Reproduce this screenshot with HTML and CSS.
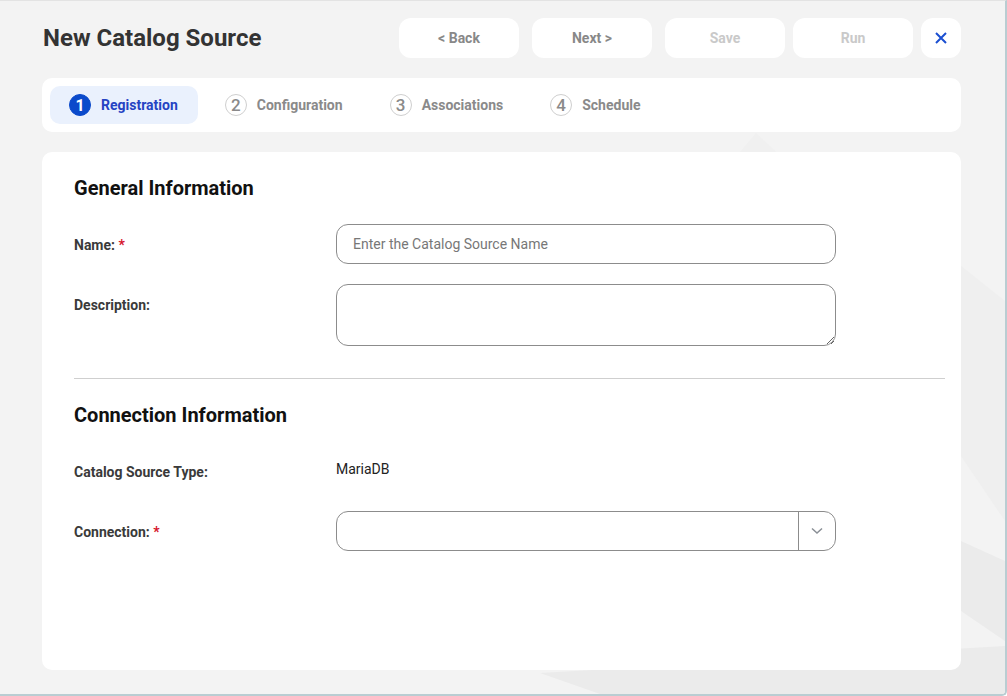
FILE: index.html
```html
<!DOCTYPE html>
<html>
<head>
<meta http-equiv="Content-Type" content="text/html; charset=utf-8"/>
<title>New Catalog Source</title>
<link rel="stylesheet" href="styles.css">
</head>
<body>
<div class="window">
  <svg class="backdrop" viewBox="0 0 1005 693" preserveAspectRatio="none">
    <polygon points="690,210 756,132 840,210" fill="#f0f0f0"/>
    <polygon points="961,265 1005,300 1005,520 961,455" fill="#efefef"/>
    <polygon points="961,540 1005,560 1005,640 961,610" fill="#ebebeb"/>
    <polygon points="540,672 1005,645 1005,693 600,693" fill="#ebebeb"/>
  </svg>

  <div class="header">
    <h1 class="title">New Catalog Source</h1>
    <div class="actions">
      <button class="btn">&lt; Back</button>
      <button class="btn">Next &gt;</button>
      <button class="btn disabled">Save</button>
      <button class="btn disabled">Run</button>
      <button class="btn close" aria-label="Close">
        <svg width="14" height="14" viewBox="0 0 14 14"><path d="M2 2 L12 12 M12 2 L2 12" stroke="#1b4fd1" stroke-width="2" fill="none"/></svg>
      </button>
    </div>
  </div>

  <div class="steps">
    <div class="step active"><span class="num">1</span>Registration</div>
    <div class="step"><span class="num">2</span>Configuration</div>
    <div class="step"><span class="num">3</span>Associations</div>
    <div class="step"><span class="num">4</span>Schedule</div>
  </div>

  <div class="card">
    <h2>General Information</h2>
    <div class="row">
      <label class="label">Name: <span class="req">*</span></label>
      <input class="field" type="text" placeholder="Enter the Catalog Source Name">
    </div>
    <div class="row">
      <label class="label">Description:</label>
      <textarea class="field area"></textarea>
    </div>

    <hr class="divider">

    <h2>Connection Information</h2>
    <div class="row">
      <label class="label">Catalog Source Type:</label>
      <div class="value">MariaDB</div>
    </div>
    <div class="row">
      <label class="label">Connection: <span class="req">*</span></label>
      <div class="field select">
        <span class="select-text"></span>
        <span class="arrow">
          <svg width="12" height="8" viewBox="0 0 12 8"><path d="M1 1.5 L6 6 L11 1.5" stroke="#8a8f96" stroke-width="1.5" fill="none"/></svg>
        </span>
      </div>
    </div>
  </div>
</div>
</body>
</html>
```

FILE: styles.css
```css
* {
  box-sizing: border-box;
}

body {
  margin: 0;
  font-family: Roboto, "Liberation Sans", sans-serif;
  background-color: white;
}

.window {
  position: relative;
  width: 1007px;
  height: 696px;
  padding: 17px 44px 0 42px;
  background-color: #f3f3f3;
  border-top: 1px solid #e3e3e3;
  border-right: 2px solid #b9cdd2;
  border-bottom: 2px solid #b9cdd2;
  border-bottom-right-radius: 5px;
  overflow: hidden;
}

.backdrop {
  position: absolute;
  left: 0;
  top: 0;
  width: 100%;
  height: 100%;
  z-index: 0;
}

.header, .steps, .card {
  position: relative;
  z-index: 1;
}

.header {
  display: flex;
  align-items: center;
  justify-content: space-between;
  height: 40px;
}

.title {
  margin: 0 0 0 1px;
  font-size: 24px;
  font-weight: 700;
  color: #333;
}

.actions {
  display: flex;
  gap: 13px;
}

.btn {
  width: 120px;
  height: 40px;
  border: none;
  border-radius: 12px;
  background: white;
  font-family: Roboto, "Liberation Sans", sans-serif;
  font-size: 14px;
  font-weight: 700;
  color: #888;
}

.btn.disabled {
  color: #c9c9c9;
}

.btn.disabled + .btn {
  margin-left: -5px;
}

.btn.close {
  width: 40px;
  margin-left: -5px;
  display: flex;
  align-items: center;
  justify-content: center;
}

.steps {
  display: flex;
  gap: 8px;
  margin-top: 20px;
  height: 54px;
  padding: 8px;
  background: white;
  border-radius: 10px;
}

.step {
  display: flex;
  align-items: center;
  gap: 10px;
  padding: 0 20px 0 19px;
  border-radius: 10px;
  font-size: 14px;
  font-weight: 700;
  color: #8a8a8a;
}

.step .num {
  display: flex;
  align-items: center;
  justify-content: center;
  width: 22px;
  height: 22px;
  border-radius: 50%;
  border: 1px solid #cfcfcf;
  font-size: 17px;
  font-weight: 500;
  color: #8a8a8a;
}

.step.active {
  background: #eaf1fd;
  color: #2543c3;
}

.step.active .num {
  background: #0b4acb;
  border-color: #0b4acb;
  color: white;
  font-weight: 700;
  font-size: 16px;
}

.card {
  margin-top: 20px;
  height: 518px;
  padding: 24px 16px 0 32px;
  background: white;
  border-radius: 10px;
}

h2 {
  margin: 0 0 24px 0;
  font-size: 20px;
  line-height: 24px;
  font-weight: 700;
  color: #111;
}

.row {
  display: flex;
  align-items: flex-start;
  margin-bottom: 20px;
}

.label {
  width: 262px;
  height: 40px;
  padding-top: 1px;
  line-height: 40px;
  font-size: 14px;
  font-weight: 700;
  color: #3a3a3a;
}

.req {
  color: #d6132a;
}

.field {
  width: 500px;
  height: 40px;
  padding: 0 16px;
  border: 1px solid #8c8c8c;
  border-radius: 12px;
  font-family: Roboto, "Liberation Sans", sans-serif;
  font-size: 14px;
  color: #222;
  background: white;
}

.field::placeholder {
  color: #777;
}

.area {
  height: 62px;
  padding-top: 10px;
  resize: vertical;
}

.divider {
  margin: 32px 0 24px 0;
  border: none;
  border-top: 1px solid #cfcfcf;
}

.value {
  line-height: 37px;
  font-size: 14px;
  color: #222;
}

.select {
  display: flex;
  padding: 0;
}

.select-text {
  flex: 1;
}

.arrow {
  display: flex;
  align-items: center;
  justify-content: center;
  width: 37px;
  border-left: 1px solid #8c8c8c;
}
```
